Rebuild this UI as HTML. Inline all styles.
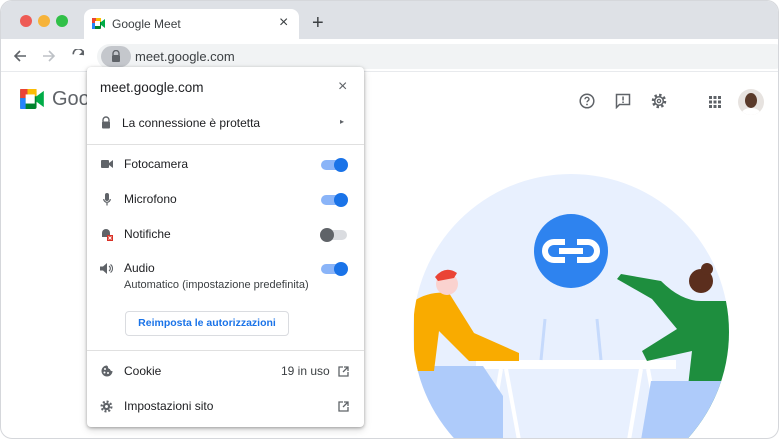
<!DOCTYPE html>
<html><head><meta charset="utf-8"><style>
*{margin:0;padding:0;box-sizing:border-box}
html,body{width:779px;height:439px;overflow:hidden}
body{background:#fff;font-family:"Liberation Sans",sans-serif;position:relative}
.win{position:absolute;left:0;top:0;width:779px;height:439px;border:1px solid #d5d7db;border-radius:12px;overflow:hidden;background:#fff}
.tabbar{position:absolute;left:0;top:0;width:100%;height:38px;background:#dee1e6}
.dot{position:absolute;top:14px;width:12px;height:12px;border-radius:50%}
.tab{position:absolute;left:83px;top:8px;width:215px;height:32px;background:#fff;border-radius:8px 8px 0 0}
.omni{position:absolute;left:96px;top:43px;width:690px;height:25px;background:#f1f3f4;border-radius:13px}
.pop{position:absolute;left:86px;top:66px;width:277px;height:360px;background:#fff;border-radius:4px;box-shadow:0 1px 3px rgba(0,0,0,.3),0 3px 8px rgba(0,0,0,.15)}
.t{position:absolute;font-size:12px;color:#202124;white-space:nowrap}
.ic{position:absolute;color:#5f6368}
.tg{position:absolute;left:234px;width:26px;height:10px;border-radius:5px;background:#8ab4f8}
.tg::after{content:"";position:absolute;right:-1px;top:-2px;width:14px;height:14px;border-radius:50%;background:#1a73e8}
.tg.off{background:#dadce0}.tg.off::after{left:-1px;right:auto;background:#5f6368}
.hr{position:absolute;left:0;width:100%;height:1px;background:#e0e0e0}
</style></head><body>
<div class="win">
<div class="tabbar"></div>
<div class="dot" style="left:19px;background:#ee5b55"></div>
<div class="dot" style="left:37px;background:#f6b33a"></div>
<div class="dot" style="left:55px;background:#31c048"></div>
<div class="tab"></div>
<svg style="position:absolute;left:91px;top:17px" width="13" height="11" viewBox="0 0 13 11"><rect x="0" y="0" width="9" height="11" rx="1" fill="#00832d"/><rect x="0" y="0" width="4" height="5" fill="#ea4335"/><rect x="4" y="0" width="5" height="4" fill="#fbbc04"/><rect x="0" y="5" width="3" height="6" fill="#2684fc"/><rect x="3" y="3" width="5" height="5" fill="#fff"/><path d="M9 4L13 1V10L9 7Z" fill="#00ac47"/></svg>
<div class="t" style="left:111px;top:16px;font-size:12px;color:#3c4043">Google Meet</div>
<div class="t" style="left:278px;top:13px;font-size:16px;color:#3c4043">×</div>
<div class="t" style="left:311px;top:11px;font-size:20px;color:#3c4043">+</div>
<div style="position:absolute;left:0;top:38px;width:100%;height:33px;background:#fff;border-bottom:1px solid #e8eaed"></div>
<div class="omni"></div>
<svg style="position:absolute;left:12px;top:48px" width="14" height="14" viewBox="0 0 14 14"><path d="M13 7H2M7 2L2 7l5 5" fill="none" stroke="#5f6368" stroke-width="1.6"/></svg>
<svg style="position:absolute;left:41px;top:48px" width="14" height="14" viewBox="0 0 14 14"><path d="M1 7h11M7 2l5 5-5 5" fill="none" stroke="#bdc1c6" stroke-width="1.6"/></svg>
<svg style="position:absolute;left:70px;top:48px" width="14" height="14" viewBox="0 0 14 14"><path d="M11.5 4.5A5 5 0 102 7" fill="none" stroke="#5f6368" stroke-width="1.6" transform="rotate(20 7 7)"/><path d="M13 1v5H8z" fill="#5f6368"/></svg>
<div style="position:absolute;left:100px;top:45px;width:30px;height:21px;border-radius:11px;background:#c4c7cc"></div>
<svg style="position:absolute;left:110px;top:49px" width="10" height="12" viewBox="0 0 10 12"><path d="M2 5V3.5a3 3 0 016 0V5" fill="none" stroke="#5f6368" stroke-width="1.4"/><rect x="1" y="5" width="8" height="7" rx="1" fill="#5f6368"/></svg>
<div class="t" style="left:134px;top:48px;font-size:13px;color:#3c4043">meet.google.com</div>
<svg style="position:absolute;left:19px;top:88px" width="24" height="20" viewBox="0 0 13 11"><rect x="0" y="0" width="9" height="11" rx="1" fill="#00832d"/><rect x="0" y="0" width="4" height="5" fill="#ea4335"/><rect x="4" y="0" width="5" height="4" fill="#fbbc04"/><rect x="0" y="5" width="3" height="6" fill="#2684fc"/><rect x="3" y="3" width="5" height="5" fill="#fff"/><path d="M9 4L13 1V10L9 7Z" fill="#00ac47"/></svg>
<div class="t" style="left:51px;top:87px;font-size:20px;color:#5f6368">Goo</div>
<svg style="position:absolute;left:578px;top:92px" width="16" height="16" viewBox="0 0 16 16"><circle cx="8" cy="8" r="6.8" fill="none" stroke="#5f6368" stroke-width="1.5"/><path d="M6 6.3a2 2 0 114 0c0 1.4-2 1.4-2 3" fill="none" stroke="#5f6368" stroke-width="1.4"/><circle cx="8" cy="11.5" r=".9" fill="#5f6368"/></svg>
<svg style="position:absolute;left:614px;top:92px" width="16" height="16" viewBox="0 0 16 16"><path d="M1.5 1.5h13v10h-10l-3 3z" fill="none" stroke="#5f6368" stroke-width="1.5"/><rect x="7.3" y="3.5" width="1.5" height="4" fill="#5f6368"/><rect x="7.3" y="8.5" width="1.5" height="1.5" fill="#5f6368"/></svg>
<svg style="position:absolute;left:650px;top:92px" width="16" height="16" viewBox="0 0 16 16"><circle cx="8" cy="8" r="6" fill="none" stroke="#5f6368" stroke-width="2.5" stroke-dasharray="2.4 2.3"/><circle cx="8" cy="8" r="4.3" fill="none" stroke="#5f6368" stroke-width="1.5"/><circle cx="8" cy="8" r="1.6" fill="none" stroke="#5f6368" stroke-width="1.3"/></svg>
<svg style="position:absolute;left:708px;top:95px" width="12" height="12" viewBox="0 0 12 12" fill="#5f6368"><rect x="0" y="0" width="3" height="3"/><rect x="4.5" y="0" width="3" height="3"/><rect x="9" y="0" width="3" height="3"/><rect x="0" y="4.5" width="3" height="3"/><rect x="4.5" y="4.5" width="3" height="3"/><rect x="9" y="4.5" width="3" height="3"/><rect x="0" y="9" width="3" height="3"/><rect x="4.5" y="9" width="3" height="3"/><rect x="9" y="9" width="3" height="3"/></svg>
<div style="position:absolute;left:737px;top:88px;width:26px;height:26px;border-radius:50%;background:#e7e3e0;overflow:hidden"><div style="position:absolute;left:7px;top:4px;width:12px;height:15px;border-radius:50%;background:#5a3a2a"></div><div style="position:absolute;left:4px;top:19px;width:18px;height:10px;border-radius:50%;background:#fff"></div></div>
<svg style="position:absolute;left:0;top:0" width="779" height="439">
<defs><clipPath id="c"><circle cx="570" cy="331" r="158"/></clipPath></defs>
<circle cx="570" cy="331" r="158" fill="#e8f0fe"/>
<g clip-path="url(#c)">
<rect x="475" y="359" width="200" height="9" fill="#fff"/>
<path d="M500 368L488 439M505 368L518 439M640 368L628 439M647 368L660 439" stroke="#fff" stroke-width="4"/>
<path d="M544 318L540 359M596 318L600 359" stroke="#c6dafc" stroke-width="3"/>
<path d="M412 365h70l20 30v44h-90z" fill="#aecbfa"/>
<path d="M413 300q15-10 35-8l25 40 45 20v8h-50l-30-30-5 40h-20z" fill="#f9ab00"/>
<circle cx="446" cy="283" r="11" fill="#fad2cf"/><path d="M434 276q10-12 22-4l-3 5-16 3z" fill="#ea4335"/>
<path d="M700 300q-20 0-40 -20l-40-7-4 5 35 20 25 30-35 22 5 10 45-10 -10 89 60 0 0-139z" fill="#1e8e3e"/>
<circle cx="700" cy="280" r="12" fill="#5b2e1d"/><circle cx="706" cy="268" r="6" fill="#5b2e1d"/>
<path d="M650 380h90v59h-100z" fill="#aecbfa"/>
</g>
<circle cx="570" cy="250" r="37" fill="#2e83ef"/>
<rect x="544" y="241" width="52" height="18" rx="9" fill="none" stroke="#fff" stroke-width="6"/>
<rect x="564" y="236" width="12" height="28" fill="#2e83ef"/>
<rect x="558" y="247" width="24" height="6" fill="#fff"/>
</svg>
<div class="pop">
<div class="t" style="left:13px;top:13px;font-size:13.5px">meet.google.com</div>
<div class="t" style="left:251px;top:11px;font-size:16px;color:#5f6368">×</div>
<svg class="ic" style="left:14px;top:49px" width="10" height="13" viewBox="0 0 10 12"><path d="M2 5V3.5a3 3 0 016 0V5" fill="none" stroke="#5f6368" stroke-width="1.4"/><rect x="1" y="5" width="8" height="7" rx="1" fill="#5f6368"/></svg>
<div class="t" style="left:35px;top:49px">La connessione è protetta</div>
<div class="t" style="left:253px;top:50px;font-size:8px;color:#5f6368">▸</div>
<div class="hr" style="top:77px"></div>
<svg class="ic" style="left:14px;top:93px" width="12" height="8" viewBox="0 0 12 8" fill="#5f6368"><rect width="8" height="8" rx="1"/><path d="M8 3l4-3v8l-4-3z"/></svg>
<div class="t" style="left:37px;top:90px">Fotocamera</div><div class="tg" style="top:93px"></div>
<svg class="ic" style="left:16px;top:126px" width="8" height="13" viewBox="0 0 8 13"><rect x="2" y="0" width="4" height="8" rx="2" fill="#5f6368"/><path d="M.7 6a3.3 3.3 0 006.6 0M4 9.5v3" fill="none" stroke="#5f6368" stroke-width="1.2"/></svg>
<div class="t" style="left:37px;top:125px">Microfono</div><div class="tg" style="top:128px"></div>
<svg class="ic" style="left:14px;top:160px" width="13" height="14" viewBox="0 0 13 14"><path d="M1 10h8V6a4 4 0 00-8 0z" fill="#5f6368"/><rect x="6" y="8" width="6" height="6" fill="#d93025"/><path d="M7.5 9.5l3 3m0-3l-3 3" stroke="#fff" stroke-width="1"/></svg>
<div class="t" style="left:37px;top:160px">Notifiche</div><div class="tg off" style="top:163px"></div>
<svg class="ic" style="left:13px;top:196px" width="13" height="11" viewBox="0 0 13 11"><path d="M0 3.5h3L7 0v11L3 7.5H0z" fill="#5f6368"/><path d="M9 3a3 3 0 010 5M10.5 1.5a5 5 0 010 8" fill="none" stroke="#5f6368" stroke-width="1.1"/></svg>
<div class="t" style="left:37px;top:194px">Audio</div><div class="tg" style="top:197px"></div>
<div class="t" style="left:37px;top:212px;font-size:11px;color:#3c4043">Automatico (impostazione predefinita)</div>
<div style="position:absolute;left:38px;top:244px;width:164px;height:25px;border:1px solid #dadce0;border-radius:4px;color:#1a73e8;font-size:10.5px;font-weight:bold;text-align:center;line-height:23px;white-space:nowrap">Reimposta le autorizzazioni</div>
<div class="hr" style="top:283px"></div>
<svg class="ic" style="left:14px;top:298px" width="12" height="12" viewBox="0 0 12 12"><path d="M6 0.5A5.5 5.5 0 1011.5 6 2 2 0 019 4 2 2 0 017 1.5 1.5 1.5 0 016 .5z" fill="#5f6368"/><circle cx="4" cy="4" r="1" fill="#fff"/><circle cx="3.5" cy="7.5" r="1" fill="#fff"/><circle cx="7" cy="8" r="1" fill="#fff"/></svg>
<div class="t" style="left:37px;top:297px">Cookie</div>
<div class="t" style="left:194px;top:297px;color:#3c4043">19 in uso</div>
<svg class="ic" style="left:251px;top:299px" width="11" height="11" viewBox="0 0 11 11"><path d="M5 1H1v9h9V6M6 1h4v4M10 1L5 6" fill="none" stroke="#5f6368" stroke-width="1.3"/></svg>
<svg class="ic" style="left:13px;top:333px" width="13" height="13" viewBox="0 0 16 16"><circle cx="8" cy="8" r="6" fill="none" stroke="#5f6368" stroke-width="2.8" stroke-dasharray="2.4 2.3"/><circle cx="8" cy="8" r="4.5" fill="#5f6368"/><circle cx="8" cy="8" r="1.8" fill="#fff"/></svg>
<div class="t" style="left:37px;top:332px">Impostazioni sito</div>
<svg class="ic" style="left:251px;top:334px" width="11" height="11" viewBox="0 0 11 11"><path d="M5 1H1v9h9V6M6 1h4v4M10 1L5 6" fill="none" stroke="#5f6368" stroke-width="1.3"/></svg>
</div>
</div>
</body></html>
